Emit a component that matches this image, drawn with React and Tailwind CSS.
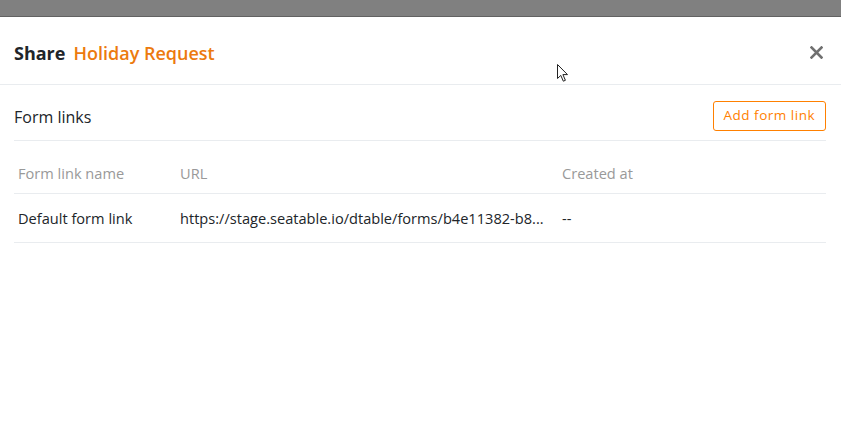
import React from "react";

const CloseIcon = () => (
  <svg width="13" height="13" viewBox="0 0 13 13" className="block">
    <path d="M1.5 1.5 L11.5 11.5 M11.5 1.5 L1.5 11.5" stroke="#707070" strokeWidth="2.6" strokeLinecap="square" />
  </svg>
);

const Cursor = () => (
  <svg width="14" height="20" viewBox="0 0 14 20" className="absolute left-[556px] top-[63px]">
    <path
      d="M1.5 1.5 L1.5 15.5 L4.8 12.4 L7.3 18.2 L9.4 17.3 L6.9 11.6 L11.5 11.6 Z"
      fill="#fff"
      stroke="#222"
      strokeWidth="1"
      strokeLinejoin="miter"
    />
  </svg>
);

const rows = [
  {
    name: "Default form link",
    url: "https://stage.seatable.io/dtable/forms/b4e11382-b8...",
    created: "--",
  },
];

const App = () => {
  return (
    <div className="relative w-[841px] h-[447px] overflow-hidden bg-white font-['Open_Sans',sans-serif] text-[#212529]">
      {/* backdrop strip above modal */}
      <div className="h-[17px] bg-[#808080] border-b border-[#626262]"></div>

      {/* modal header */}
      <div className="h-[68px] flex items-center justify-between pl-[14px] pr-[18px] border-b border-[#e9ecef]">
        <h1 className="flex items-center gap-[8px] text-[18px] leading-none pt-[5px]">
          <span className="font-bold text-[#212529]">Share</span>
          <span className="font-semibold text-[#ec7a0e]">Holiday Request</span>
        </h1>
        <button className="p-0 mt-[4px]">
          <CloseIcon />
        </button>
      </div>

      {/* modal body */}
      <div className="px-[14px] pr-[15px]">
        <div className="h-[56px] pt-[5px] flex items-center justify-between border-b border-[#e9ecef]">
          <h2 className="text-[16px] leading-none pt-[3px]">Form links</h2>
          <button className="mt-[2px] h-[30px] px-[10px] rounded-[3px] border border-[#ff8000] text-[#ff8000] text-[13.5px] tracking-[0.5px] leading-none">
            Add form link
          </button>
        </div>

        <table className="w-full border-collapse text-[14.6px]">
          <thead>
            <tr className="h-[52px] border-b border-[#e9ecef] text-[#999]">
              <th className="w-[162px] pl-[4px] pt-[14px] font-normal text-left">Form link name</th>
              <th className="w-[382px] pl-[4px] pt-[14px] font-normal text-left">URL</th>
              <th className="pl-[4px] pt-[14px] font-normal text-left">Created at</th>
            </tr>
          </thead>
          <tbody>
            {rows.map((row, index) => (
              <tr key={index} className="h-[49px] border-b border-[#e9ecef]">
                <td className="pl-[4px] pt-[2px] whitespace-nowrap">{row.name}</td>
                <td className="pl-[4px] pt-[2px] whitespace-nowrap">{row.url}</td>
                <td className="pl-[4px] pt-[2px]">{row.created}</td>
              </tr>
            ))}
          </tbody>
        </table>
      </div>

      <Cursor />
    </div>
  );
};

export default App;
